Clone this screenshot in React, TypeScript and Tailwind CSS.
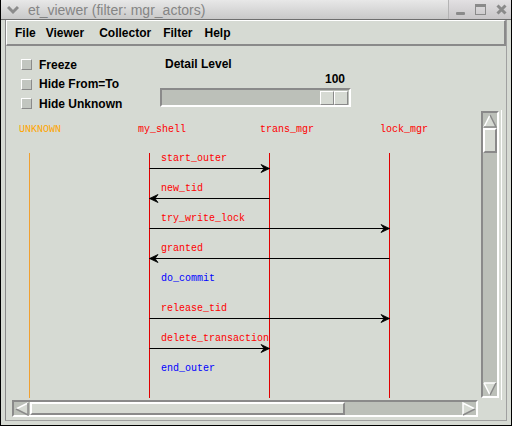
import React from "react";

const RED = "#ff0000";
const BLUE = "#0000ff";

const lifelines = [
  { name: "UNKNOWN", x: 23, lx: 13, text: "#ffa500", line: "#f0a030" },
  { name: "my_shell", x: 143, lx: 132, text: RED, line: "#e00000" },
  { name: "trans_mgr", x: 263, lx: 254, text: RED, line: "#e00000" },
  { name: "lock_mgr", x: 383, lx: 374, text: RED, line: "#e00000" },
];

const messages: { label: string; color: string; from?: number; to?: number }[] = [
  { label: "start_outer", color: RED, from: 143, to: 263 },
  { label: "new_tid", color: RED, from: 263, to: 143 },
  { label: "try_write_lock", color: RED, from: 143, to: 383 },
  { label: "granted", color: RED, from: 383, to: 143 },
  { label: "do_commit", color: BLUE },
  { label: "release_tid", color: RED, from: 143, to: 383 },
  { label: "delete_transaction", color: RED, from: 143, to: 263 },
  { label: "end_outer", color: BLUE },
];

function TitleBar() {
  return (
    <div className="flex h-[20px] shrink-0 items-stretch border-b border-[#6f6f6f] bg-gradient-to-b from-[#e8e8e8] to-[#c9c9c9]">
      <div className="flex flex-1 items-center">
        <svg width="12" height="10" viewBox="0 0 12 10" className="ml-[6px]">
          <path d="M1 2 L6 7 L11 2" stroke="#8c8c8c" strokeWidth="3" fill="none" />
        </svg>
        <span className="ml-[9px] text-[14px] leading-none text-[#858585]">et_viewer (filter: mgr_actors)</span>
      </div>
      <div className="flex w-[63px] items-center gap-[10px] border-l border-[#b4b4b4] bg-gradient-to-b from-[#e2e0e2] to-[#c8c6c8] pl-[7px]">
        <div className="mt-[7px] h-[3px] w-[9px] rounded-[1px] bg-[#8a8a8a]" />
        <div className="h-[11px] w-[11px] border border-t-[3px] border-[#8a8a8a]" />
        <svg width="11" height="11" viewBox="0 0 11 11">
          <path d="M1.5 1.5 L9.5 9.5 M9.5 1.5 L1.5 9.5" stroke="#8a8a8a" strokeWidth="3" />
        </svg>
      </div>
    </div>
  );
}

function MenuBar() {
  return (
    <div className="flex h-[26px] shrink-0 items-center border-l border-t border-white border-b-2 border-r-2 border-b-[#8a8a8a] border-r-[#8a8a8a] text-[12px] font-bold">
      <span className="ml-[8px]">File</span>
      <span className="ml-[10px]">Viewer</span>
      <span className="ml-[15px]">Collector</span>
      <span className="ml-[12px]">Filter</span>
      <span className="ml-[12px]">Help</span>
    </div>
  );
}

function Check({ label }: { label: string }) {
  return (
    <div className="flex h-[19.5px] shrink-0 items-center">
      <div className="h-[11px] w-[11px] border border-l-white border-t-white border-b-[#8a8a8a] border-r-[#8a8a8a] bg-[#c2c6c0]" />
      <span className="ml-[7px] text-[12px] font-bold">{label}</span>
    </div>
  );
}

function Controls() {
  return (
    <div className="flex h-[64px] shrink-0">
      <div className="flex w-[154px] flex-col pl-[15px] pt-[9px]">
        <Check label="Freeze" />
        <Check label="Hide From=To" />
        <Check label="Hide Unknown" />
      </div>
      <div className="flex w-[191px] flex-col pt-[11px] text-[12px] font-bold leading-[14px]">
        <span className="pl-[5px]">Detail Level</span>
        <span className="mt-[1px] pr-[6px] text-right">100</span>
        <div className="mt-[2px] flex h-[19px] shrink-0 items-center justify-end border-2 border-l-[#8a8a8a] border-t-[#8a8a8a] border-b-white border-r-white bg-[#bcc0b9] pr-[1px]">
          <div className="h-[14px] w-[14px] border border-l-white border-t-white border-b-[#8a8a8a] border-r-[#8a8a8a] bg-[#d6dad3]" />
          <div className="h-[14px] w-[14px] border border-l-white border-t-white border-b-[#8a8a8a] border-r-[#8a8a8a] bg-[#d6dad3]" />
        </div>
      </div>
    </div>
  );
}

function Arrow({ dir }: { dir: "up" | "down" | "left" | "right" }) {
  const pts = {
    up: { tri: "7,1 1,13 13,13", light: "M7 1 L1 13", dark: "M1 13 L13 13 L7 1" },
    down: { tri: "1,1 13,1 7,13", light: "M1 1 L13 1 M1 1 L7 13", dark: "M13 1 L7 13" },
    left: { tri: "1,7 13,1 13,13", light: "M1 7 L13 1", dark: "M1 7 L13 13 L13 1" },
    right: { tri: "1,1 13,7 1,13", light: "M1 13 L1 1 L13 7", dark: "M13 7 L1 13" },
  }[dir];
  return (
    <svg width="14" height="14" viewBox="0 0 14 14">
      <polygon points={pts.tri} fill="#d6dad3" />
      <path d={pts.light} stroke="#ffffff" strokeWidth="1.5" fill="none" />
      <path d={pts.dark} stroke="#8a8a8a" strokeWidth="1.5" fill="none" />
    </svg>
  );
}

function Diagram() {
  return (
    <svg width="475" height="290" viewBox="0 0 475 290" className="shrink-0">
      {lifelines.map((l) => (
        <g key={l.name}>
          <text x={l.lx} y={21.5} fill={l.text} fontFamily="Liberation Mono, monospace" fontSize="10">
            {l.name}
          </text>
          <line x1={l.x + 0.5} y1={43} x2={l.x + 0.5} y2={288} stroke={l.line} strokeWidth="1" />
        </g>
      ))}
      {messages.map((m, i) => {
        const cy = 47 + 30 * i;
        const ay = 58 + 30 * i + 0.5;
        const right = m.from !== undefined && m.to !== undefined && m.to > m.from;
        const t = m.to ?? 0;
        return (
          <g key={m.label}>
            <text x={155} y={cy + 3.5} fill={m.color} fontFamily="Liberation Mono, monospace" fontSize="10">
              {m.label}
            </text>
            {m.from !== undefined && m.to !== undefined && (
              <>
                <line x1={m.from + 0.5} y1={ay} x2={t + 0.5} y2={ay} stroke="#000" strokeWidth="1" />
                <polygon
                  points={
                    right
                      ? `${t + 0.5},${ay} ${t - 8},${ay - 4} ${t - 5},${ay} ${t - 8},${ay + 4}`
                      : `${t + 0.5},${ay} ${t + 9},${ay - 4} ${t + 6},${ay} ${t + 9},${ay + 4}`
                  }
                  fill="#000"
                  stroke="#000"
                  strokeWidth="0.8"
                />
              </>
            )}
          </g>
        );
      })}
    </svg>
  );
}

function VScroll() {
  return (
    <div className="mt-[1px] flex h-[287px] w-[18px] flex-col border-2 border-l-[#8a8a8a] border-t-[#8a8a8a] border-b-white border-r-white bg-[#bcc0b9]">
      <div className="flex h-[15px] items-center justify-center">
        <Arrow dir="up" />
      </div>
      <div className="h-[25px] border-2 border-l-white border-t-white border-b-[#8a8a8a] border-r-[#8a8a8a] bg-[#d6dad3]" />
      <div className="flex-1" />
      <div className="flex h-[15px] items-center justify-center">
        <Arrow dir="down" />
      </div>
    </div>
  );
}

function HScroll() {
  return (
    <div className="flex h-[17px] w-[466px] border-2 border-l-[#8a8a8a] border-t-[#8a8a8a] border-b-white border-r-white bg-[#bcc0b9]">
      <div className="flex w-[16px] items-center justify-center">
        <Arrow dir="left" />
      </div>
      <div className="w-[315px] border-2 border-l-white border-t-white border-b-[#8a8a8a] border-r-[#8a8a8a] bg-[#d6dad3]" />
      <div className="flex-1" />
      <div className="flex w-[15px] items-center justify-center">
        <Arrow dir="right" />
      </div>
    </div>
  );
}

export default function App() {
  return (
    <div className="flex h-[426px] w-[512px] flex-col overflow-hidden border-x border-b border-black bg-[#d6dad3] font-['Liberation_Sans',Arial,sans-serif] text-black">
      <TitleBar />
      <div className="mx-[4px] mb-[4px] flex min-h-0 flex-1 flex-col border-b border-l border-r border-b-[#a0a0a0] border-l-[#8a8a8a] border-r-[#a0a0a0]">
        <MenuBar />
        <Controls />
        <div className="flex h-[290px] shrink-0">
          <Diagram />
          <VScroll />
          <div className="ml-[2px] w-[1px] bg-white" />
        </div>
        <div className="flex h-[17px] shrink-0 pl-[6px]">
          <HScroll />
        </div>
      </div>
    </div>
  );
}
